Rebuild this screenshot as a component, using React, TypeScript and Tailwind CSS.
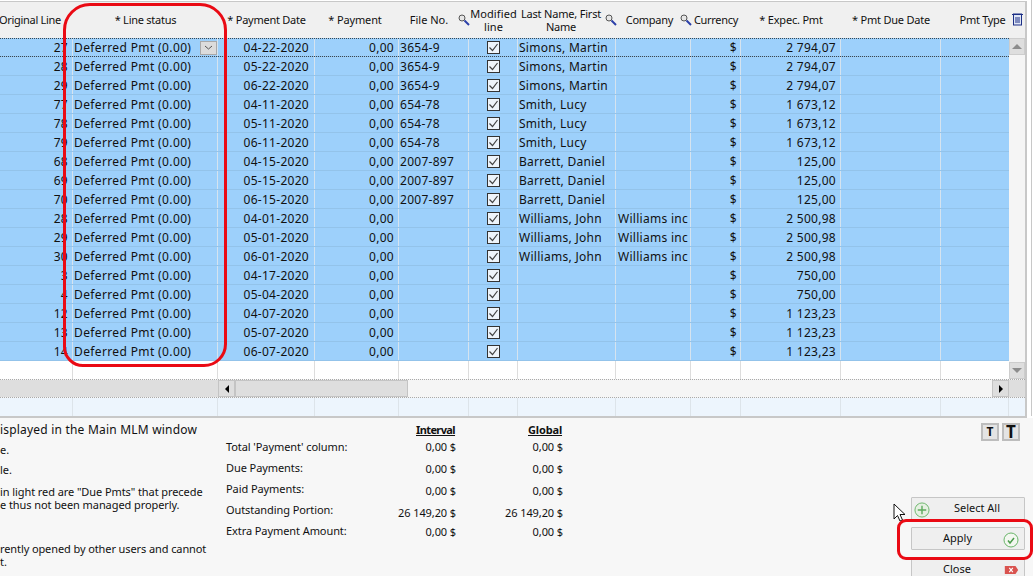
import React from 'react'

const grid = "grid grid-cols-[73px_145px_97px_84px_70px_49px_98px_75px_50px_100px_100px_68px]"

const rows = [
  ["27", "04-22-2020", "0,00", "3654-9", "Simons, Martin", "", "2 794,07"],
  ["28", "05-22-2020", "0,00", "3654-9", "Simons, Martin", "", "2 794,07"],
  ["29", "06-22-2020", "0,00", "3654-9", "Simons, Martin", "", "2 794,07"],
  ["77", "04-11-2020", "0,00", "654-78", "Smith, Lucy", "", "1 673,12"],
  ["78", "05-11-2020", "0,00", "654-78", "Smith, Lucy", "", "1 673,12"],
  ["79", "06-11-2020", "0,00", "654-78", "Smith, Lucy", "", "1 673,12"],
  ["68", "04-15-2020", "0,00", "2007-897", "Barrett, Daniel", "", "125,00"],
  ["69", "05-15-2020", "0,00", "2007-897", "Barrett, Daniel", "", "125,00"],
  ["70", "06-15-2020", "0,00", "2007-897", "Barrett, Daniel", "", "125,00"],
  ["28", "04-01-2020", "0,00", "", "Williams, John", "Williams inc", "2 500,98"],
  ["29", "05-01-2020", "0,00", "", "Williams, John", "Williams inc", "2 500,98"],
  ["30", "06-01-2020", "0,00", "", "Williams, John", "Williams inc", "2 500,98"],
  ["3", "04-17-2020", "0,00", "", "", "", "750,00"],
  ["4", "05-04-2020", "0,00", "", "", "", "750,00"],
  ["12", "04-07-2020", "0,00", "", "", "", "1 123,23"],
  ["13", "05-07-2020", "0,00", "", "", "", "1 123,23"],
  ["14", "06-07-2020", "0,00", "", "", "", "1 123,23"],
]

const totals = [
  ["Total 'Payment' column:", "0,00 $", "0,00 $", "top-[447px]", "top-[447px]"],
  ["Due Payments:", "0,00 $", "0,00 $", "top-[468px]", "top-[469px]"],
  ["Paid Payments:", "0,00 $", "0,00 $", "top-[489px]", "top-[491px]"],
  ["Outstanding Portion:", "26 149,20 $", "26 149,20 $", "top-[510px]", "top-[513px]"],
  ["Extra Payment Amount:", "0,00 $", "0,00 $", "top-[531px]", "top-[532px]"],
]

const helpLines = [
  ["isplayed in the Main MLM window", "top-[423px] text-[12px] tracking-[0.2px]"],
  ["e.", "top-[443px]"],
  ["le.", "top-[463px]"],
  ['in light red are "Due Pmts" that precede', "top-[485px] tracking-[-0.08px]"],
  ["e thus not been managed properly.", "top-[498px] tracking-[-0.08px]"],
  ["rently opened by other users and cannot", "top-[542px] tracking-[-0.1px]"],
  ["t.", "top-[555px]"],
]

const Lens = ({ x }: { x: string }) => (
  <svg className={"absolute top-[12px] " + x} width="12" height="12" viewBox="0 0 12 12" fill="none">
    <circle cx="4" cy="4" r="3" fill="#e6e6e6" stroke="#555" />
    <path d="M6.5 6.5l4.5 4.5" stroke="#2b3fa8" strokeWidth="2" />
  </svg>
)

const Check = () => (
  <svg width="13" height="13" viewBox="0 0 13 13" fill="none" className="block">
    <rect x="0.5" y="0.5" width="12" height="12" fill="#eef4fa" stroke="#333" />
    <path d="M2.5 6.5l3 3 5-6.5" stroke="#444" strokeWidth="1.2" />
  </svg>
)

const Head = ({ className, children }: { className: string; children: React.ReactNode }) => (
  <div className={"flex items-center h-full pb-[1px] leading-[13px] text-[11px] " + className}>{children}</div>
)

const Cell = ({ className, children }: { className?: string; children?: React.ReactNode }) => (
  <div className={"h-full pt-[1px] border-r border-[#d5e3ef] flex items-center whitespace-nowrap overflow-hidden tracking-[0.28px] " + (className || "")}>{children}</div>
)

export default function App() {
  return (
    <div className="relative w-[1033px] h-[576px] overflow-hidden bg-white font-['DejaVu_Sans',sans-serif] text-[12px] text-[#111]">
      <div className="absolute left-[1031px] top-0 w-px h-[416px] bg-[#c8c8c8]" />

      {/* grid */}
      <div className="absolute left-0 top-[1px] w-[1027px] h-[417px] border-t border-r-2 border-b-2 border-[#c8c8c8] bg-white">
        <div className={grid + " h-[36px] bg-[#f0f0f0] relative"}>
          <Head className="justify-end pr-[12px] whitespace-nowrap tracking-[-0.3px]">Original Line</Head>
          <Head className="justify-center tracking-[-0.25px]">* Line status</Head>
          <Head className="justify-center tracking-[-0.25px]">* Payment Date</Head>
          <Head className="justify-center pr-[4px] tracking-[-0.15px]">* Payment</Head>
          <Head className="justify-center pr-[10px]">File No.</Head>
          <Head className="justify-center text-center tracking-[0.1px]">Modified<br />line</Head>
          <Head className="justify-center text-center pr-[14px] pl-[2px] tracking-[-0.2px]">Last Name, First Name</Head>
          <Head className="justify-end pr-[18px] tracking-[-0.3px]">Company</Head>
          <Head className="justify-end pr-[3px] tracking-[-0.3px]">Currency</Head>
          <Head className="justify-center tracking-[-0.2px]">* Expec. Pmt</Head>
          <Head className="justify-center tracking-[-0.2px]">* Pmt Due Date</Head>
          <Head className="justify-center pl-[15px] tracking-[-0.3px] whitespace-nowrap">Pmt Type</Head>
        </div>
        <Lens x="left-[458px]" />
        <Lens x="left-[605px]" />
        <Lens x="left-[680px]" />
        <svg className="absolute left-[1012px] top-[11px]" width="11" height="13" viewBox="0 0 11 13" fill="none">
          <rect x="1.5" y="1" width="8" height="11" fill="#dfe6f6" stroke="#1c2f86" />
          <path d="M0 1.5h11M3 5h5M3 7h5M3 9h5" stroke="#1c2f86" />
        </svg>

        <div className="w-[1009px]">
          {rows.map((r, i) => (
            <div key={i} className={grid + " h-[19px] bg-[#9dd0fb] border-b border-[#93c3ea]"}>
              <Cell className="justify-end pr-[4px]">{r[0]}</Cell>
              <Cell className="justify-between pl-[1px]">
                <span className="tracking-[0.37px]">Deferred Pmt (0.00)</span>
                {i === 0 && (
                  <span className="w-[17px] h-[14px] bg-[#dcdcdc] border border-[#a9a9a9] flex items-center justify-center">
                    <svg width="9" height="5" viewBox="0 0 9 5" fill="none"><path d="M1 1l3.5 3L8 1" stroke="#555" /></svg>
                  </span>
                )}
              </Cell>
              <Cell className="justify-end pr-[5px]">{r[1]}</Cell>
              <Cell className="justify-end pr-[4px]">{r[2]}</Cell>
              <Cell className="pl-[1px]">{r[3]}</Cell>
              <Cell className="justify-center"><Check /></Cell>
              <Cell className="pl-[1px]">{r[4]}</Cell>
              <Cell className="pl-[2px]">{r[5]}</Cell>
              <Cell className="justify-end pr-[3px]">$</Cell>
              <Cell className="justify-end pr-[4px]">{r[6]}</Cell>
              <Cell />
              <Cell className="border-r-0" />
            </div>
          ))}
          <div className={grid + " h-[18px]"}>
            {Array.from({ length: 11 }).map((_, i) => (
              <div key={i} className="border-r border-[#dddddd]" />
            ))}
          </div>
        </div>

        {/* focus lines of the current row */}
        <div className="absolute left-0 top-[36px] w-[1009px] h-[19px] border-y border-dotted border-[#3a4650]" />

        {/* vertical scrollbar */}
        <div className="absolute left-[1009px] top-[36px] w-[16px] h-[341px] bg-[#f5f5f5] flex flex-col justify-between">
          <div className="h-[17px] bg-[#dedede] border border-[#cdcdcd] flex items-center justify-center">
            <div className="w-0 h-0 border-x-[5px] border-x-transparent border-b-[5px] border-b-[#8c8c8c]" />
          </div>
          <div className="h-[17px] bg-[#dedede] border border-[#cdcdcd] flex items-center justify-center">
            <div className="w-0 h-0 border-x-[5px] border-x-transparent border-t-[5px] border-t-[#8c8c8c]" />
          </div>
        </div>

        {/* horizontal scrollbar */}
        <div className="absolute left-0 top-[377px] w-[1025px] h-[19px] flex border-y border-dotted border-[#aaaaaa] bg-[#f5f5f5]">
          <div className="w-[218px] bg-[#dedede]" />
          <div className="w-[17px] bg-[#dedede] border border-[#c4c4c4] flex items-center justify-center">
            <div className="w-0 h-0 border-y-[4px] border-y-transparent border-r-[4px] border-r-black" />
          </div>
          <div className="w-[173px] bg-[#dedede] border border-[#c4c4c4]" />
          <div className="w-[584px]" />
          <div className="w-[17px] bg-[#dedede] border border-[#c4c4c4] flex items-center justify-center">
            <div className="w-0 h-0 border-y-[4px] border-y-transparent border-l-[4px] border-l-black" />
          </div>
          <div className="flex-1 bg-[#dedede]" />
        </div>

        {/* total row */}
        <div className={grid + " absolute left-0 top-[396px] w-[1025px] h-[18px] bg-[#edf5fd]"}>
          {Array.from({ length: 12 }).map((_, i) => (
            <div key={i} className="border-r border-[#dde4ea]" />
          ))}
        </div>
      </div>

      {/* lower panel */}
      <div className="absolute left-0 top-[418px] w-[1033px] h-[158px] bg-[#f7f7f7]" />

      {helpLines.map(([t, c]) => (
        <div key={t} className={"absolute left-0 whitespace-nowrap text-[11px] leading-[14px] " + c}>{t}</div>
      ))}

      <div className="absolute left-[416px] top-[423px] text-[11px] leading-[14px] font-bold underline tracking-[-0.6px]">Interval</div>
      <div className="absolute left-[528px] top-[423px] text-[11px] leading-[14px] font-bold underline tracking-[-0.15px]">Global</div>
      {totals.map(([label, a, b, lt, vt]) => (
        <React.Fragment key={label}>
          <div className={"absolute left-[226px] text-[11px] leading-[14px] whitespace-nowrap -mt-[7px] tracking-[-0.08px] " + lt}>{label}</div>
          <div className={"absolute right-[577px] text-[11px] leading-[14px] whitespace-nowrap -mt-[7px] tracking-[-0.1px] " + vt}>{a}</div>
          <div className={"absolute right-[470px] text-[11px] leading-[14px] whitespace-nowrap -mt-[7px] tracking-[-0.1px] " + vt}>{b}</div>
        </React.Fragment>
      ))}

      {/* font size buttons */}
      <div className="absolute left-[981px] top-[423px] w-[18px] h-[18px] bg-[#e4e4e4] border-2 border-[#bdbdbd] flex items-center justify-center font-['Liberation_Serif',serif] font-bold text-[12px]">T</div>
      <div className="absolute left-[1002px] top-[423px] w-[18px] h-[18px] bg-[#e4e4e4] border-2 border-[#bdbdbd] flex items-center justify-center font-['Liberation_Serif',serif] font-bold text-[17px]">T</div>

      {/* buttons */}
      <div className="absolute left-[911px] top-[497px] w-[114px] h-[23px] bg-[#efefef] border border-[#c6c6c6] rounded-[1px] flex items-center justify-center pl-[18px] text-[11px]">Select All</div>
      <svg className="absolute left-[914px] top-[502px]" width="16" height="16" viewBox="0 0 17 17" fill="none">
        <circle cx="8.5" cy="8.5" r="7.5" fill="#e6f0e2" stroke="#6ab56a" />
        <path d="M8.5 4v9M4 8.5h9" stroke="#5eab5e" strokeWidth="1.5" />
      </svg>
      <div className="absolute left-[911px] top-[527px] w-[114px] h-[23px] bg-[#efefef] border border-[#c6c6c6] rounded-[1px] flex items-center pl-[31px] text-[11px]">Apply</div>
      <svg className="absolute left-[1003px] top-[532px]" width="16" height="16" viewBox="0 0 16 16" fill="none">
        <circle cx="8" cy="8" r="7" fill="#f3f7f0" stroke="#6ab56a" />
        <path d="M5 8.5l2 2.5 4-5" stroke="#4b9b4b" strokeWidth="1.5" />
      </svg>
      <div className="absolute left-[911px] top-[557px] w-[114px] h-[24px] bg-[#efefef] border border-[#c6c6c6] rounded-[1px] flex items-center pl-[31px] text-[11px]">Close</div>
      <svg className="absolute left-[1004px] top-[566px]" width="15" height="8" viewBox="0 0 15 9" fill="none">
        <path d="M0 0h12l3 4.5-3 4.5H0z" fill="#d9534f" />
        <path d="M5 2l4 5M9 2L5 7" stroke="#fff" strokeWidth="1.3" />
      </svg>

      {/* mouse pointer */}
      <svg className="absolute left-[893px] top-[503px]" width="13" height="19" viewBox="0 0 13 19" fill="none">
        <path d="M1 1v15l3.5-3.5 2.5 5.5 2.5-1-2.5-5.5H12z" fill="#fff" stroke="#111" />
      </svg>

      {/* red annotations */}
      <div className="absolute left-[63px] top-[3px] w-[164px] h-[364px] border-[3px] border-[#ea0a14] rounded-[27px_27px_23px_20px]" />
      <div className="absolute left-[897px] top-[519px] w-[136px] h-[41px] border-[3px] border-[#ea0a14] rounded-[9px]" />
    </div>
  )
}
